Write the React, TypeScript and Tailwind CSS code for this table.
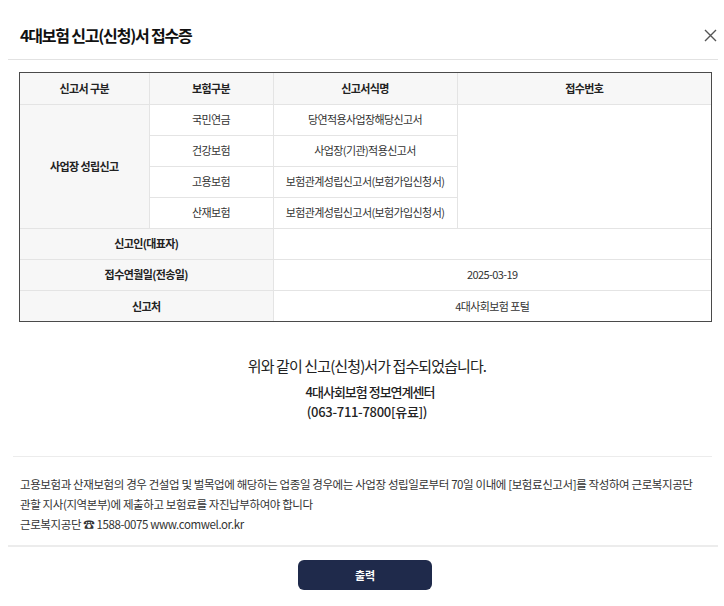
import React from "react";

const font = { fontFamily: '"Noto Sans CJK KR", "Noto Sans", sans-serif' };

function CloseIcon() {
  return (
    <svg width="13" height="13" viewBox="0 0 13 13" fill="none">
      <path d="M1 1 L12 12 M12 1 L1 12" stroke="#555" strokeWidth="1.4" />
    </svg>
  );
}

export default function App() {
  const th = "h-[31px] border border-[#e4e4e4] bg-[#f7f7f7] text-center font-bold text-[#222]";
  const td = "h-[31px] border border-[#e4e4e4] bg-white text-center text-[#333]";
  const lb = "h-[31px] border border-[#e4e4e4] bg-[#f7f7f7] text-center font-bold text-[#222]";
  return (
    <div className="w-[724px] bg-white pl-[8px] pr-[6px]" style={font}>
      <div className="flex items-center justify-between border-b border-[#e2e2e2] pb-[14px] pl-[12px] pr-[1px] pt-[25px]">
        <h1 className="text-[16px] font-bold leading-[20px] tracking-[-1.2px] text-[#111]">4대보험 신고(신청)서 접수증</h1>
        <CloseIcon />
      </div>

      <div className="ml-[11px] mr-[6px] mt-[12px] border border-[#4a4a4a]">
        <table className="w-full border-collapse border-hidden text-[11px] tracking-[-0.6px]">
          <colgroup>
            <col className="w-[129px]" />
            <col className="w-[124px]" />
            <col className="w-[184px]" />
            <col />
          </colgroup>
          <thead>
            <tr>
              <th className={th}>신고서 구분</th>
              <th className={th}>보험구분</th>
              <th className={th}>신고서식명</th>
              <th className={th}>접수번호</th>
            </tr>
          </thead>
          <tbody>
            <tr>
              <td rowSpan={4} className={lb}>사업장 성립신고</td>
              <td className={td}>국민연금</td>
              <td className={td}>당연적용사업장해당신고서</td>
              <td rowSpan={4} className={td}></td>
            </tr>
            <tr>
              <td className={td}>건강보험</td>
              <td className={td}>사업장(기관)적용신고서</td>
            </tr>
            <tr>
              <td className={td}>고용보험</td>
              <td className={td}>보험관계성립신고서(보험가입신청서)</td>
            </tr>
            <tr>
              <td className={td}>산재보험</td>
              <td className={td}>보험관계성립신고서(보험가입신청서)</td>
            </tr>
            <tr>
              <td colSpan={2} className={lb}>신고인(대표자)</td>
              <td colSpan={2} className={td}></td>
            </tr>
            <tr>
              <td colSpan={2} className={lb}>접수연월일(전송일)</td>
              <td colSpan={2} className={td}>2025-03-19</td>
            </tr>
            <tr>
              <td colSpan={2} className={lb}>신고처</td>
              <td colSpan={2} className={td}>4대사회보험 포털</td>
            </tr>
          </tbody>
        </table>
      </div>

      <div className="mt-[34px] pl-[8px] text-center">
        <p className="text-[15px] leading-[20px] tracking-[-0.9px] text-[#222]">위와 같이 신고(신청)서가 접수되었습니다.</p>
        <p className="mt-[6px] pl-[6px] text-[13px] font-medium leading-[20px] tracking-[-1px] text-[#222]">4대사회보험 정보연계센터</p>
        <p className="text-[13px] font-medium leading-[20px] tracking-[-0.3px] text-[#222]">(063-711-7800[유료])</p>
      </div>

      <div className="ml-[5px] mr-[6px] mt-[34px] border-t border-[#ececec] pb-[11px] pl-[7px] pt-[17px]">
        <p className="whitespace-nowrap text-[11.5px] leading-[20px] tracking-[-0.4px] text-[#333]">
          고용보험과 산재보험의 경우 건설업 및 벌목업에 해당하는 업종일 경우에는 사업장 성립일로부터 70일 이내에 [보험료신고서]를 작성하여 근로복지공단
          <br />
          관할 지사(지역본부)에 제출하고 보험료를 자진납부하여야 합니다
          <br />
          근로복지공단 ☎ 1588-0075 www.comwel.or.kr
        </p>
      </div>

      <div className="flex justify-center border-t-2 border-[#ececec] pb-[16px] pl-[4px] pt-[13px]">
        <button className="h-[30px] w-[134px] rounded-[6px] bg-[#1f2a4b] text-[11px] font-bold text-white">출력</button>
      </div>
    </div>
  );
}
